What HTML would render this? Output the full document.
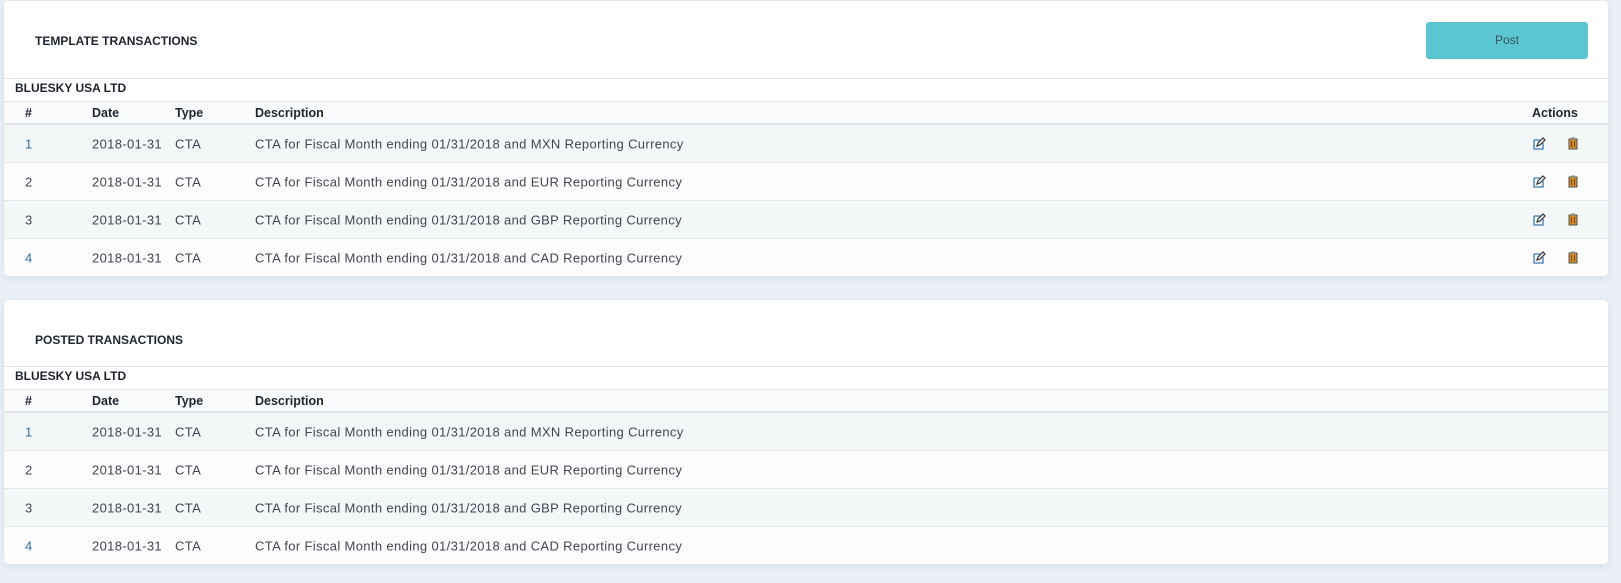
<!DOCTYPE html>
<html><head><style>
body{margin:0;background:#ebf0f7;font-family:"Liberation Sans",sans-serif;color:#3d4a5a;width:1621px;height:583px;overflow:hidden;position:relative}
.card{position:absolute;left:4px;width:1604px;background:#fff;border-radius:4px;box-shadow:0 2px 8px rgba(60,80,110,.12);overflow:hidden}
.title{height:77px;border-bottom:1px solid #e3e7ec;position:relative}
.title span{position:absolute;left:31px;top:33px;font-weight:bold;font-size:12px;color:#1e2530}
.btn{position:absolute;left:1422px;top:21px;width:162px;height:37px;background:#5bc5d2;border-radius:3px;color:#3a5560;font-size:12px;text-align:center;line-height:37px}
.co{height:22px;border-bottom:1px solid #e3e7ec;font-weight:bold;font-size:12px;color:#1e2530;padding-left:11px;line-height:18px}
.hd{height:21px;background:#fafbfc;border-bottom:2px solid #e1e5ea;position:relative;font-weight:bold;font-size:12.5px;color:#1e2530}
.row{height:37px;border-bottom:1px solid #e3e7ec;position:relative;font-size:13px;letter-spacing:.35px;color:#445}
.row:nth-child(odd){background:#f4f7f8}.row:nth-child(even){background:#fcfcfc}
.hd span,.row span{position:absolute;top:50%;transform:translateY(-50%)}
.c1{left:21px}.c2{left:88px}.c3{left:171px}.c4{left:251px}
.blue{color:#2a6fa8}
.ic{position:absolute;top:12px}
</style></head><body>
<div class="card" style="top:1px">
<div class="title"><span>TEMPLATE TRANSACTIONS</span><div class="btn">Post</div></div>
<div class="co">BLUESKY USA LTD</div>
<div class="hd"><span class="c1">#</span><span class="c2">Date</span><span class="c3">Type</span><span class="c4">Description</span><span style="left:1528px">Actions</span></div>
<div>
<div class="row"><span class="c1 blue">1</span><span class="c2">2018-01-31</span><span class="c3">CTA</span><span class="c4">CTA for Fiscal Month ending 01/31/2018 and MXN Reporting Currency</span>
<svg class="ic" style="left:1529px" width="13" height="13" viewBox="0 0 13 13"><path d="M1 3h6M1 3v9h9V6" fill="none" stroke="#3a7ab8" stroke-width="1.3"/><path d="M4 9l1-3 5-5 2 2-5 5z" fill="#fff" stroke="#333" stroke-width="1.2"/></svg>
<svg class="ic" style="left:1564px" width="10" height="13" viewBox="0 0 10 13"><rect x="1" y="2" width="8" height="10" fill="#d08a2a" stroke="#555" stroke-width="1"/><rect x="3" y="0.5" width="4" height="2" fill="#888"/><path d="M3.5 4v6M6.5 4v6" stroke="#7a4a10"/></svg></div>
<div class="row"><span class="c1">2</span><span class="c2">2018-01-31</span><span class="c3">CTA</span><span class="c4">CTA for Fiscal Month ending 01/31/2018 and EUR Reporting Currency</span>
<svg class="ic" style="left:1529px" width="13" height="13" viewBox="0 0 13 13"><path d="M1 3h6M1 3v9h9V6" fill="none" stroke="#3a7ab8" stroke-width="1.3"/><path d="M4 9l1-3 5-5 2 2-5 5z" fill="#fff" stroke="#333" stroke-width="1.2"/></svg>
<svg class="ic" style="left:1564px" width="10" height="13" viewBox="0 0 10 13"><rect x="1" y="2" width="8" height="10" fill="#d08a2a" stroke="#555" stroke-width="1"/><rect x="3" y="0.5" width="4" height="2" fill="#888"/><path d="M3.5 4v6M6.5 4v6" stroke="#7a4a10"/></svg></div>
<div class="row"><span class="c1">3</span><span class="c2">2018-01-31</span><span class="c3">CTA</span><span class="c4">CTA for Fiscal Month ending 01/31/2018 and GBP Reporting Currency</span>
<svg class="ic" style="left:1529px" width="13" height="13" viewBox="0 0 13 13"><path d="M1 3h6M1 3v9h9V6" fill="none" stroke="#3a7ab8" stroke-width="1.3"/><path d="M4 9l1-3 5-5 2 2-5 5z" fill="#fff" stroke="#333" stroke-width="1.2"/></svg>
<svg class="ic" style="left:1564px" width="10" height="13" viewBox="0 0 10 13"><rect x="1" y="2" width="8" height="10" fill="#d08a2a" stroke="#555" stroke-width="1"/><rect x="3" y="0.5" width="4" height="2" fill="#888"/><path d="M3.5 4v6M6.5 4v6" stroke="#7a4a10"/></svg></div>
<div class="row" style="border-bottom:none"><span class="c1 blue">4</span><span class="c2">2018-01-31</span><span class="c3">CTA</span><span class="c4">CTA for Fiscal Month ending 01/31/2018 and CAD Reporting Currency</span>
<svg class="ic" style="left:1529px" width="13" height="13" viewBox="0 0 13 13"><path d="M1 3h6M1 3v9h9V6" fill="none" stroke="#3a7ab8" stroke-width="1.3"/><path d="M4 9l1-3 5-5 2 2-5 5z" fill="#fff" stroke="#333" stroke-width="1.2"/></svg>
<svg class="ic" style="left:1564px" width="10" height="13" viewBox="0 0 10 13"><rect x="1" y="2" width="8" height="10" fill="#d08a2a" stroke="#555" stroke-width="1"/><rect x="3" y="0.5" width="4" height="2" fill="#888"/><path d="M3.5 4v6M6.5 4v6" stroke="#7a4a10"/></svg></div>
</div></div>

<div class="card" style="top:300px">
<div class="title" style="height:66px"><span>POSTED TRANSACTIONS</span></div>
<div class="co">BLUESKY USA LTD</div>
<div class="hd"><span class="c1">#</span><span class="c2">Date</span><span class="c3">Type</span><span class="c4">Description</span></div>
<div>
<div class="row"><span class="c1 blue">1</span><span class="c2">2018-01-31</span><span class="c3">CTA</span><span class="c4">CTA for Fiscal Month ending 01/31/2018 and MXN Reporting Currency</span></div>
<div class="row"><span class="c1">2</span><span class="c2">2018-01-31</span><span class="c3">CTA</span><span class="c4">CTA for Fiscal Month ending 01/31/2018 and EUR Reporting Currency</span></div>
<div class="row"><span class="c1">3</span><span class="c2">2018-01-31</span><span class="c3">CTA</span><span class="c4">CTA for Fiscal Month ending 01/31/2018 and GBP Reporting Currency</span></div>
<div class="row" style="border-bottom:none"><span class="c1 blue">4</span><span class="c2">2018-01-31</span><span class="c3">CTA</span><span class="c4">CTA for Fiscal Month ending 01/31/2018 and CAD Reporting Currency</span></div>
</div></div>
</body></html>
